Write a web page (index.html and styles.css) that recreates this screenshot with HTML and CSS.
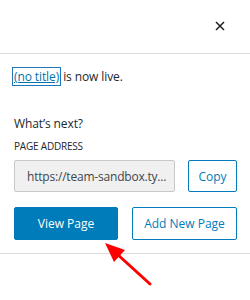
FILE: index.html
```html
<!DOCTYPE html>
<html>
<head>
<meta charset="utf-8">
<link rel="stylesheet" href="styles.css">
</head>
<body>
<div class="panel">
  <div class="header">
    <button class="close" aria-label="Close">
      <svg width="10" height="10" viewBox="0 0 10 10"><path d="M1 1L9 9M9 1L1 9" stroke="#1e1e1e" stroke-width="1.5" fill="none"/></svg>
    </button>
  </div>
  <div class="body">
    <p class="live"><a class="link" href="#">(no title)</a> is now live.</p>
    <p class="next">What’s next?</p>
    <div class="label">PAGE ADDRESS</div>
    <div class="addr-row">
      <div class="input">https://team-sandbox.ty...</div>
      <button class="btn secondary">Copy</button>
    </div>
    <div class="btn-row">
      <button class="btn primary">View Page</button>
      <button class="btn secondary">Add New Page</button>
    </div>
  </div>
</div>
<svg class="arrow" width="60" height="52" viewBox="0 0 60 52">
  <path d="M51 48L18 18" stroke="#f00" stroke-width="3" stroke-linecap="round" fill="none"/>
  <path d="M6 7L26 14L15 26Z" fill="#f00"/>
</svg>
</body>
</html>
```
FILE: styles.css
```css
* { box-sizing: border-box; }
body {
  margin: 0;
  width: 250px;
  height: 300px;
  background: #fff;
  font-family: "Open Sans", "Noto Sans", sans-serif;
  font-size: 12px;
  color: #23282d;
  position: relative;
  overflow: hidden;
}
.panel {
  width: 250px;
}
.header {
  height: 54px;
  border-bottom: 1px solid #dcdcde;
  display: flex;
  justify-content: flex-end;
  align-items: center;
  padding: 0 21px 2px 0;
}
.close {
  border: 0;
  background: none;
  padding: 4px;
  display: flex;
  cursor: pointer;
}
.body {
  padding: 14px 13px 13px 14px;
  border-bottom: 1px solid #dcdcde;
}
.live {
  margin: 0;
  line-height: 18px;
  letter-spacing: -0.1px;
}
.link {
  color: #0073aa;
  text-decoration: underline;
  outline: 1px solid #1e76b8;
  box-shadow: 0 0 0 1px #5b9dd9;
  margin-left: -1px;
  padding: 0 1px;
}
.next {
  margin: 29px 0 0;
  line-height: 18px;
  letter-spacing: -0.1px;
}
.label {
  margin-top: 6px;
  font-size: 10px;
  letter-spacing: -0.2px;
  line-height: 14px;
}
.addr-row {
  margin-top: 7px;
  display: flex;
  gap: 13px;
  height: 32px;
}
.input {
  width: 161px;
  background: #f0f0f0;
  border: 1px solid #c8c8c8;
  border-radius: 2px;
  color: #40464d;
  padding: 0 6px 0 12px;
  letter-spacing: -0.2px;
  display: flex;
  align-items: center;
  white-space: nowrap;
  overflow: hidden;
}
.btn {
  font-family: inherit;
  font-size: 12px;
  border-radius: 2px;
  cursor: pointer;
  padding: 0;
}
.addr-row .btn {
  width: 49px;
}
.secondary {
  background: #fff;
  color: #007cba;
  border: 1px solid #007cba;
}
.primary {
  background: #007cba;
  color: #fff;
  border: 1px solid #007cba;
}
.btn-row {
  margin-top: 15px;
  display: grid;
  grid-template-columns: 104px 105px;
  gap: 14px;
  height: 33px;
}
.arrow {
  position: absolute;
  left: 99px;
  top: 236px;
}
```
